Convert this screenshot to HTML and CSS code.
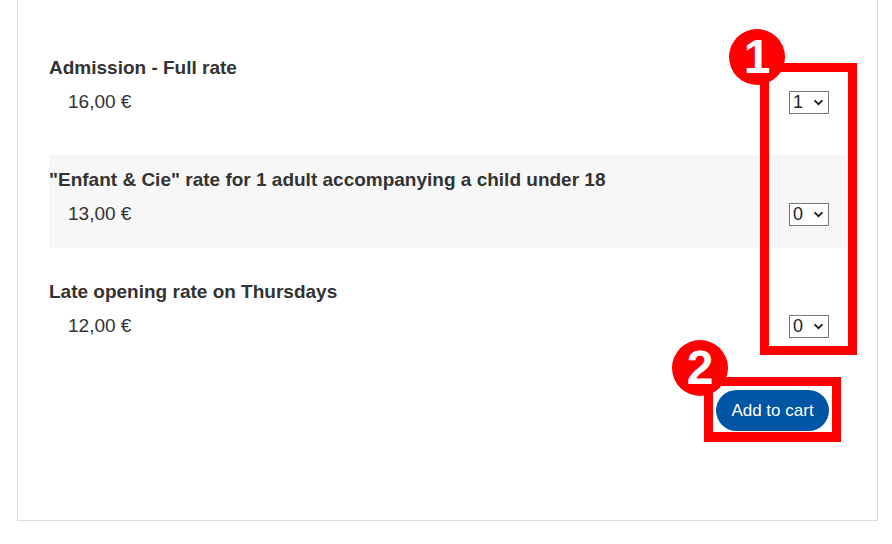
FILE: index.html
```html
<!DOCTYPE html>
<html>
<head>
<meta charset="utf-8">
<link rel="stylesheet" href="styles.css">
</head>
<body>
<div class="card">
  <div class="rows">
    <div class="row">
      <div class="title">Admission - Full rate</div>
      <div class="line">
        <span class="price">16,00 €</span>
        <span class="qty">1<svg class="chev" viewBox="0 0 12 8" width="11" height="7"><path d="M1.5 1.5 L6 6 L10.5 1.5" fill="none" stroke="#222" stroke-width="2.2"/></svg></span>
      </div>
    </div>
    <div class="row alt">
      <div class="title">"Enfant &amp; Cie" rate for 1 adult accompanying a child under 18</div>
      <div class="line">
        <span class="price">13,00 €</span>
        <span class="qty">0<svg class="chev" viewBox="0 0 12 8" width="11" height="7"><path d="M1.5 1.5 L6 6 L10.5 1.5" fill="none" stroke="#222" stroke-width="2.2"/></svg></span>
      </div>
    </div>
    <div class="row">
      <div class="title">Late opening rate on Thursdays</div>
      <div class="line">
        <span class="price">12,00 €</span>
        <span class="qty">0<svg class="chev" viewBox="0 0 12 8" width="11" height="7"><path d="M1.5 1.5 L6 6 L10.5 1.5" fill="none" stroke="#222" stroke-width="2.2"/></svg></span>
      </div>
    </div>
  </div>
  <div class="actions">
    <button class="cart">Add to cart</button>
  </div>
</div>

<div class="mark box1"></div>
<div class="badge badge1">1</div>
<div class="mark box2"></div>
<div class="badge badge2">2</div>
</body>
</html>
```
FILE: styles.css
```css
html, body {
  margin: 0;
  padding: 0;
  background: #fff;
}
body {
  font-family: "Liberation Sans", Arial, sans-serif;
  color: #333;
  position: relative;
  width: 892px;
  height: 544px;
  overflow: hidden;
}
.card {
  margin-left: 17px;
  border: 1px solid #dcdcdc;
  border-top: 0;
  padding: 43px 30px 89px 31px;
  box-sizing: content-box;
  width: 798px;
}
.rows {
  display: flex;
  flex-direction: column;
  gap: 19px;
}
.row {
  height: 93px;
  box-sizing: border-box;
  padding: 13px 18px 0 0;
}
.row.alt {
  background: #f7f7f7;
}
.title {
  font-weight: bold;
  font-size: 19px;
  line-height: 23px;
  color: #333;
}
.line {
  display: flex;
  align-items: center;
  justify-content: space-between;
  margin-top: 11px;
  height: 24px;
}
.price {
  padding-left: 19px;
  font-size: 19px;
  color: #333;
}
.qty {
  display: inline-flex;
  align-items: center;
  justify-content: space-between;
  box-sizing: border-box;
  width: 40px;
  height: 23px;
  border: 1px solid #777;
  background: #fff;
  padding: 0 4px 0 3px;
  font-size: 18px;
  color: #222;
}
.chev {
  display: block;
}
.actions {
  display: flex;
  justify-content: flex-end;
  padding-right: 18px;
  margin-top: 30px;
}
.cart {
  width: 113px;
  height: 41px;
  border: 0;
  border-radius: 21px;
  background: #0055a5;
  color: #fff;
  font-family: "Liberation Sans", Arial, sans-serif;
  font-size: 17px;
  padding: 0;
  cursor: pointer;
}
.mark {
  position: absolute;
  box-sizing: border-box;
  border: 9px solid #f00;
}
.box1 {
  left: 760px;
  top: 63px;
  width: 97px;
  height: 292px;
}
.box2 {
  left: 704px;
  top: 377px;
  width: 137px;
  height: 65px;
  border-width: 9px 9px 10px 9px;
}
.badge {
  position: absolute;
  width: 56px;
  height: 56px;
  border-radius: 50%;
  background: #f00;
  color: #fff;
  font-family: "Liberation Sans", Arial, sans-serif;
  font-weight: bold;
  font-size: 48px;
  line-height: 56px;
  text-align: center;
}
.badge1 {
  left: 729px;
  top: 29px;
}
.badge2 {
  left: 672px;
  top: 340px;
}
```
